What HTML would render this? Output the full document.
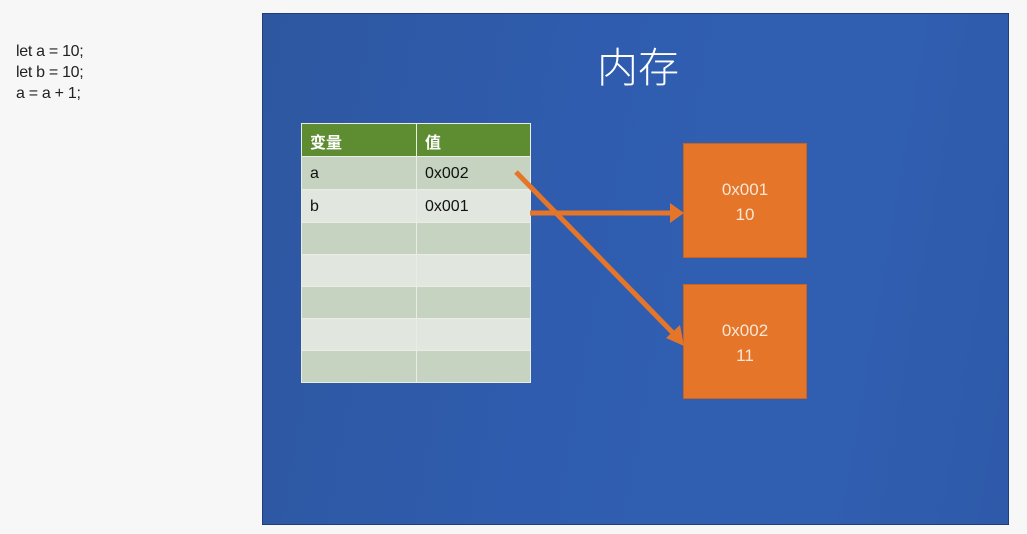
<!DOCTYPE html>
<html><head><meta charset="utf-8"><style>
body{margin:0;width:1027px;height:534px;background:#f7f7f7;position:relative;overflow:hidden;font-family:"Liberation Sans","Noto Sans CJK SC",sans-serif}
.code{position:absolute;left:16px;top:41px;font-size:16px;line-height:21px;color:#222;letter-spacing:-0.3px}
.slide{position:absolute;left:262px;top:13px;width:747px;height:512px;background:linear-gradient(100deg,#2e57a0 0%,#2f5cae 40%,#305fb2 70%,#2f5aaa 100%);border:1px solid #1f3f7a;box-sizing:border-box}
.title{position:absolute;left:597px;top:34px;font-size:41px;color:#fff;font-family:"Noto Sans CJK SC",sans-serif;font-weight:300}
table{position:absolute;left:301px;top:123px;border-collapse:collapse;width:230px}
td{height:31.5px;padding:2px 0 0 8px;font-size:16px;color:#111;border:1px solid #e9ede5;box-sizing:border-box}
td:first-child{width:115px}
tr.h td{background:#5e8c31;color:#fff;font-weight:bold;font-family:"Noto Sans CJK SC",sans-serif}
tr.d td{background:#c6d3c0}
tr.l td{background:#e1e6df}
.box{position:absolute;left:683px;width:124px;height:115px;background:#e57629;color:#fbe6d6;font-size:17px;text-align:center;line-height:25px;box-sizing:border-box;padding-top:33px;border:1px solid #c9631f}
</style></head><body>
<div class="code">let a = 10;<br>let b = 10;<br>a = a + 1;</div>
<div class="slide"></div>
<div class="title">内存</div>
<table>
<tr class="h"><td style="height:33px">变量</td><td>值</td></tr>
<tr class="d"><td style="height:33px">a</td><td>0x002</td></tr>
<tr class="l"><td style="height:33px">b</td><td>0x001</td></tr>
<tr class="d"><td style="height:32px"></td><td></td></tr>
<tr class="l"><td style="height:32px"></td><td></td></tr>
<tr class="d"><td style="height:32px"></td><td></td></tr>
<tr class="l"><td style="height:32px"></td><td></td></tr>
<tr class="d"><td style="height:32px"></td><td></td></tr>
</table>
<div class="box" style="top:143px">0x001<br>10</div>
<div class="box" style="top:284px">0x002<br>11</div>
<svg width="1027" height="534" style="position:absolute;left:0;top:0">
<g stroke="#e57629" stroke-width="5" fill="#e57629">
<line x1="530" y1="213" x2="672" y2="213"/>
<line x1="516" y1="172" x2="674" y2="334"/>
</g>
<polygon points="684,213 670,203 670,223" fill="#e57629"/>
<polygon points="684,346 666,338 680,325" fill="#e57629"/>
</svg>
</body></html>
